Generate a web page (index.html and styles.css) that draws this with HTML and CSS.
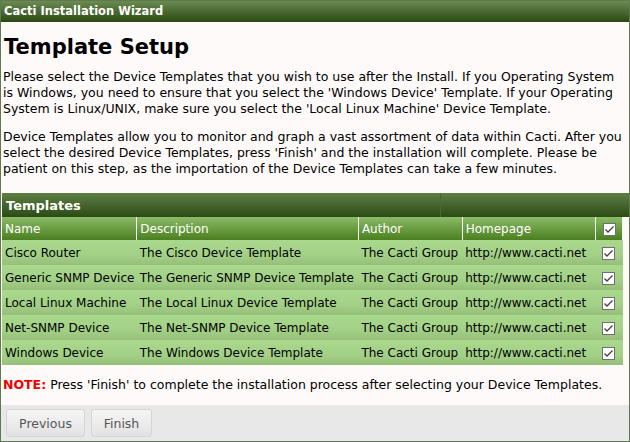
FILE: index.html
```html
<!DOCTYPE html>
<html>
<head>
<meta charset="utf-8">
<link rel="stylesheet" href="styles.css">
</head>
<body>
<div class="wizard">
  <div class="title">Cacti Installation Wizard</div>
  <div class="content">
    <h2 class="heading">Template Setup</h2>
    <p class="para">Please select the Device Templates that you wish to use after the Install. If you Operating System is Windows, you need to ensure that you select the 'Windows Device' Template. If your Operating System is Linux/UNIX, make sure you select the 'Local Linux Machine' Device Template.</p>
    <p class="para">Device Templates allow you to monitor and graph a vast assortment of data within Cacti. After you select the desired Device Templates, press 'Finish' and the installation will complete. Please be patient on this step, as the importation of the Device Templates can take a few minutes.</p>
    <div class="caption"><span class="caption-text">Templates</span><span class="caption-rest"></span></div>
    <table class="templates">
      <thead>
        <tr class="cols">
          <th class="c-name">Name</th>
          <th class="c-desc">Description</th>
          <th class="c-author">Author</th>
          <th class="c-home">Homepage</th>
          <th class="c-check"><span class="cb"><svg width="13" height="13" viewBox="0 0 13 13"><rect x="0.5" y="0.5" width="12" height="12" fill="#fff" stroke="#707070"/><path d="M2.5 6.5 L5 9 L10.5 3.5" fill="none" stroke="#404040" stroke-width="1.3"/></svg></span></th>
        </tr>
      </thead>
      <tbody>
        <tr><td>Cisco Router</td><td>The Cisco Device Template</td><td>The Cacti Group</td><td>http://www.cacti.net</td><td class="c-check"><span class="cb"><svg width="13" height="13" viewBox="0 0 13 13"><rect x="0.5" y="0.5" width="12" height="12" fill="#fff" stroke="#707070"/><path d="M2.5 6.5 L5 9 L10.5 3.5" fill="none" stroke="#404040" stroke-width="1.3"/></svg></span></td></tr>
        <tr><td>Generic SNMP Device</td><td>The Generic SNMP Device Template</td><td>The Cacti Group</td><td>http://www.cacti.net</td><td class="c-check"><span class="cb"><svg width="13" height="13" viewBox="0 0 13 13"><rect x="0.5" y="0.5" width="12" height="12" fill="#fff" stroke="#707070"/><path d="M2.5 6.5 L5 9 L10.5 3.5" fill="none" stroke="#404040" stroke-width="1.3"/></svg></span></td></tr>
        <tr><td>Local Linux Machine</td><td>The Local Linux Device Template</td><td>The Cacti Group</td><td>http://www.cacti.net</td><td class="c-check"><span class="cb"><svg width="13" height="13" viewBox="0 0 13 13"><rect x="0.5" y="0.5" width="12" height="12" fill="#fff" stroke="#707070"/><path d="M2.5 6.5 L5 9 L10.5 3.5" fill="none" stroke="#404040" stroke-width="1.3"/></svg></span></td></tr>
        <tr><td>Net-SNMP Device</td><td>The Net-SNMP Device Template</td><td>The Cacti Group</td><td>http://www.cacti.net</td><td class="c-check"><span class="cb"><svg width="13" height="13" viewBox="0 0 13 13"><rect x="0.5" y="0.5" width="12" height="12" fill="#fff" stroke="#707070"/><path d="M2.5 6.5 L5 9 L10.5 3.5" fill="none" stroke="#404040" stroke-width="1.3"/></svg></span></td></tr>
        <tr><td>Windows Device</td><td>The Windows Device Template</td><td>The Cacti Group</td><td>http://www.cacti.net</td><td class="c-check"><span class="cb"><svg width="13" height="13" viewBox="0 0 13 13"><rect x="0.5" y="0.5" width="12" height="12" fill="#fff" stroke="#707070"/><path d="M2.5 6.5 L5 9 L10.5 3.5" fill="none" stroke="#404040" stroke-width="1.3"/></svg></span></td></tr>
      </tbody>
    </table>
    <p class="note"><span class="note-label">NOTE:</span> Press 'Finish' to complete the installation process after selecting your Device Templates.</p>
  </div>
  <div class="buttons">
    <button class="btn btn-prev">Previous</button>
    <button class="btn btn-finish">Finish</button>
  </div>
</div>
</body>
</html>
```
FILE: styles.css
```css
html, body {
  margin: 0;
  padding: 0;
  background: #ffffff;
}
.wizard {
  width: 628px;
  height: 440px;
  border: 1px solid #5f7a4f;
  background: #fefafa;
  font-family: "DejaVu Sans", Verdana, sans-serif;
  font-size: 12px;
  color: #000;
  display: flex;
  flex-direction: column;
}
.title {
  height: 21px;
  line-height: 21px;
  padding-left: 3px;
  color: #fff;
  font-weight: bold;
  font-size: 11.5px;
  background: linear-gradient(#6b8b52, #2b4813);
}
.content {
  flex: 1;
  padding: 0 0 0 1px;
}
.heading {
  margin: 13px 0 0 2px;
  font-size: 21px;
  line-height: 24px;
  font-weight: bold;
}
.para {
  margin: 10px 0 0 1px;
  font-size: 12.5px;
  line-height: 16px;
  padding-right: 2px;
}
.para + .para {
  margin-top: 12px;
}
.caption {
  margin-top: 16px;
  height: 24px;
  display: flex;
  background: linear-gradient(#5d7f45, #2d4a15);
}
.caption-text {
  width: 434px;
  line-height: 26px;
  padding-left: 4px;
  color: #fff;
  font-weight: bold;
  font-size: 13px;
  border-right: 1px solid #4a6a33;
}
.caption-rest { flex: 1; }
.templates {
  border-collapse: collapse;
  width: 621px;
  margin-left: 0;
}
.templates th, .templates td {
  padding: 0 0 0 3px;
  text-align: left;
  white-space: nowrap;
  font-weight: normal;
}
.cols th {
  height: 23px;
  color: #fff;
  background: linear-gradient(#8bbb67, #4b7e20);
  border-right: 1px solid #f4f4f0;
}
.c-name { width: 132px; }
.c-desc { width: 219px; }
.c-author { width: 101px; }
.c-home { width: 132px; }
.c-check { width: 21px; }
.templates td {
  height: 25px;
  background: linear-gradient(#a9d98c, #a3d087 60%, #97bf79);
}
.templates .c-check { padding: 0 0 0 7px; }
.cb { display: inline-block; width: 13px; height: 13px; vertical-align: middle; }
.cb svg { display: block; }
.note {
  margin: 12px 0 0 1px;
  font-size: 12.5px;
  line-height: 16px;
}
.note-label { color: #ee0000; font-weight: bold; }
.buttons {
  height: 36px;
  background: #e8e8e8;
  display: flex;
  gap: 6px;
  align-items: center;
  padding-left: 5px;
}
.btn {
  height: 28px;
  border: 1px solid #d4d4d4;
  border-radius: 3px;
  background: linear-gradient(#f6f6f6, #e2e2e2);
  color: #555;
  font-family: "DejaVu Sans", Verdana, sans-serif;
  font-size: 12.5px;
  padding: 0 8px;
}
.btn-prev { width: 79px; }
.btn-finish { width: 61px; }
```
